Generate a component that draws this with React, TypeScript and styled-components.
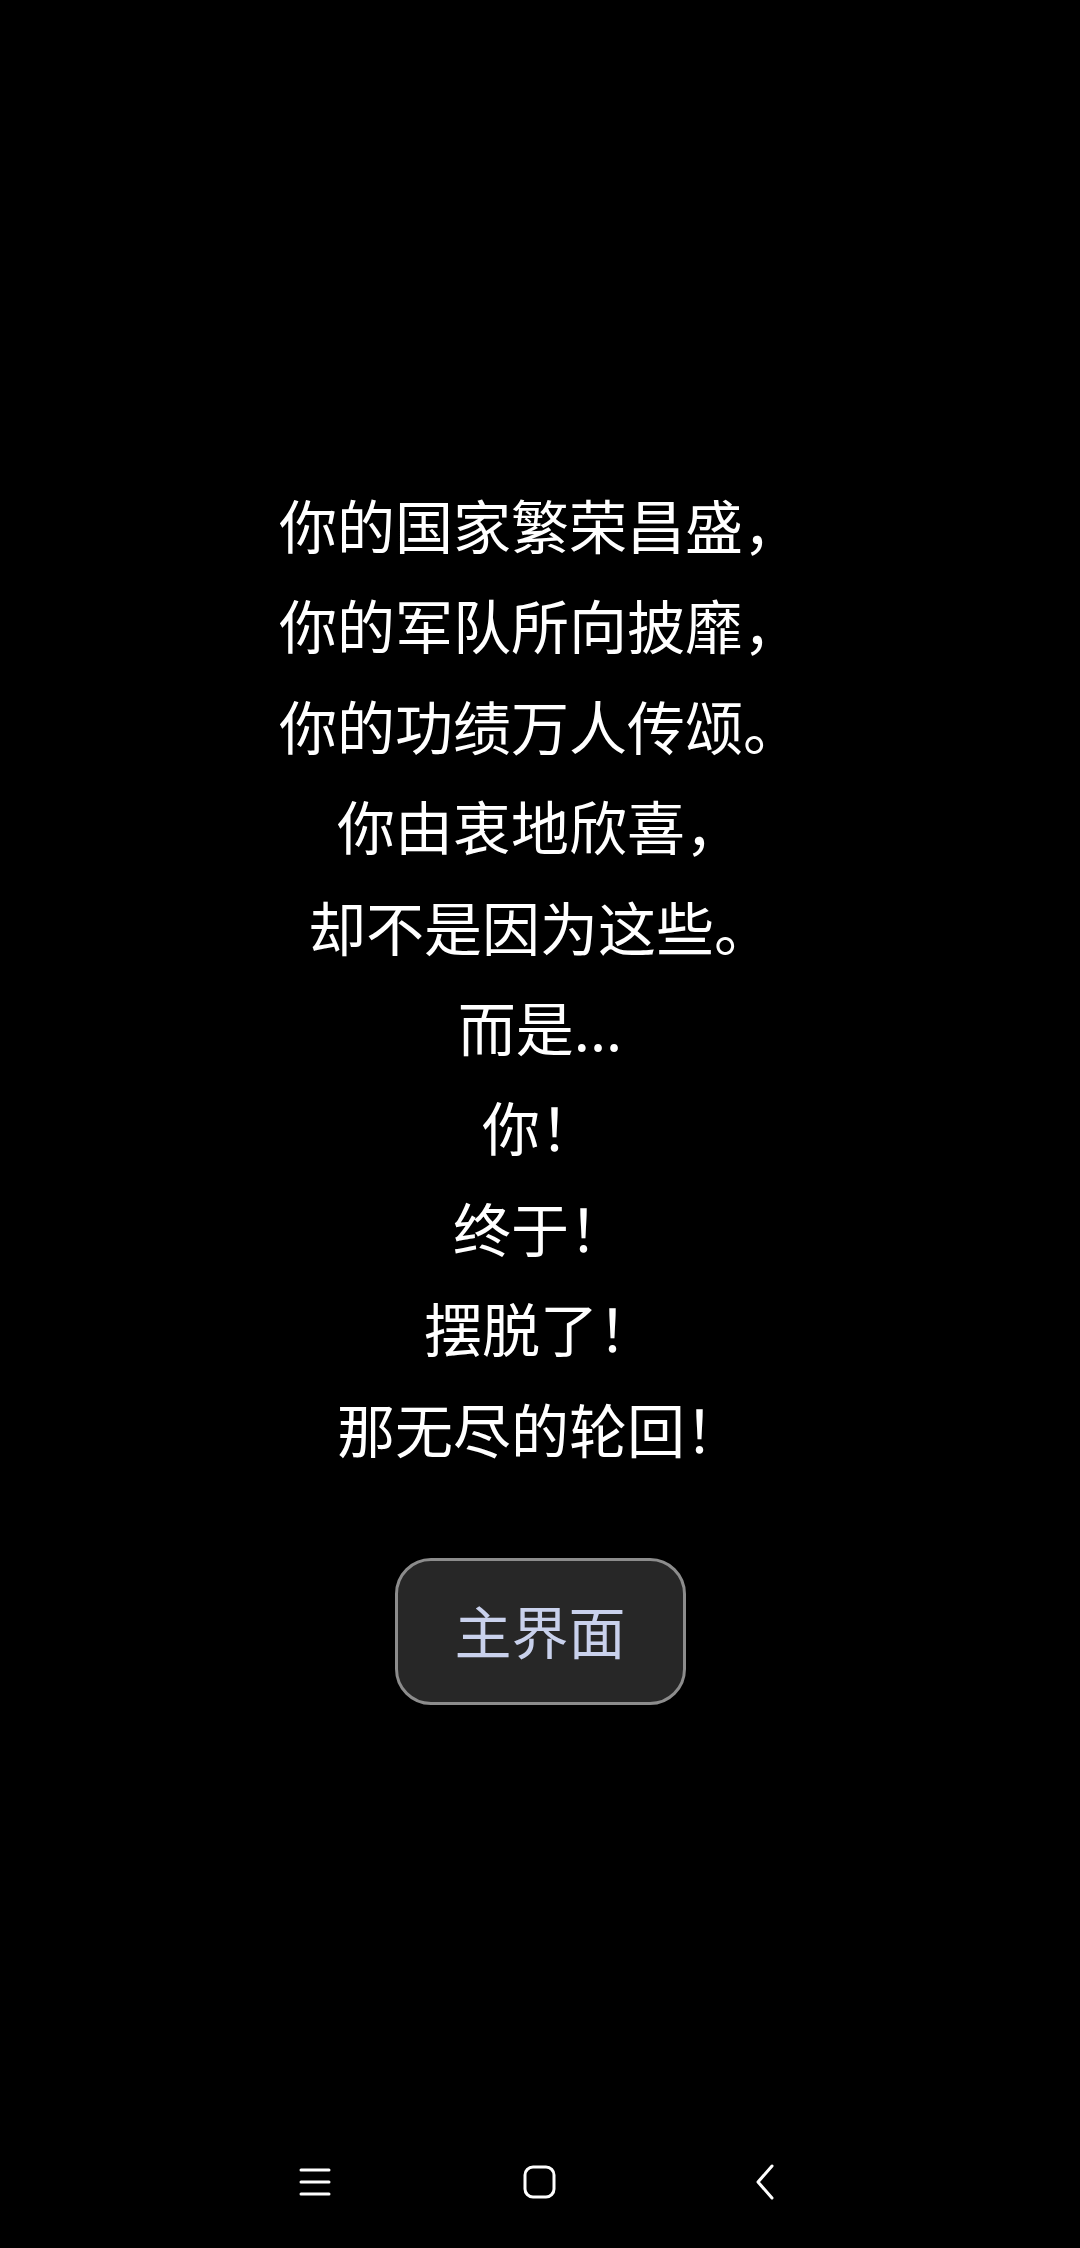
import styled, { createGlobalStyle } from 'styled-components';

const GlobalStyle = createGlobalStyle`
	html, body {
		margin: 0;
		padding: 0;
		background: #000;
	}
	body {
		font-family: 'Noto Sans CJK SC', 'Noto Sans', sans-serif;
	}
`;

const Screen = styled.div`
	width: 1080px;
	height: 2248px;
	background: #000;
	display: flex;
	flex-direction: column;
	overflow: hidden;
`;

const Main = styled.main`
	flex: 1;
	display: flex;
	flex-direction: column;
	align-items: center;
	padding-top: 474px;
`;

const Poem = styled.div`
	display: flex;
	flex-direction: column;
	align-items: center;
`;

const Line = styled.p`
	margin: 0;
	height: 100.4px;
	line-height: 100.4px;
	font-size: 58px;
	color: #fff;
	white-space: nowrap;
`;

const HomeButton = styled.button`
	margin-top: 80px;
	width: 291px;
	height: 147px;
	box-sizing: border-box;
	border: 3px solid #8c8c8c;
	border-radius: 36px;
	background: #272727;
	color: #c9d1ec;
	font-family: 'Noto Sans CJK SC', sans-serif;
	font-size: 57px;
	display: flex;
	align-items: center;
	justify-content: center;
	padding: 0 0 4px;
	cursor: pointer;
`;

const NavBar = styled.nav`
	height: 132px;
	display: grid;
	grid-template-columns: repeat(3, 225px);
	justify-content: center;
	align-items: center;
	justify-items: center;
`;

const NavIcon = styled.svg`
	display: block;
	fill: none;
	stroke: #fff;
	stroke-width: 3;
	stroke-linecap: round;
	stroke-linejoin: round;
`;

const lines = [
	'你的国家繁荣昌盛，',
	'你的军队所向披靡，',
	'你的功绩万人传颂。',
	'你由衷地欣喜，',
	'却不是因为这些。',
	'而是...',
	'你！',
	'终于！',
	'摆脱了！',
	'那无尽的轮回！',
];

function App() {
	return (
		<Screen>
			<GlobalStyle />
			<Main>
				<Poem>
					{lines.map((text, i) => (
						<Line key={i}>{text}</Line>
					))}
				</Poem>
				<HomeButton type='button'>主界面</HomeButton>
			</Main>
			<NavBar>
				<NavIcon width='32' height='32' viewBox='0 0 32 32'>
					<path d='M2 4h28M2 16h28M2 28h28' />
				</NavIcon>
				<NavIcon width='34' height='34' viewBox='0 0 34 34'>
					<rect x='2' y='2' width='29' height='30' rx='8' />
				</NavIcon>
				<NavIcon width='20' height='36' viewBox='0 0 20 36'>
					<path d='M17 2L3 18l14 16' />
				</NavIcon>
			</NavBar>
		</Screen>
	);
}

export default App;
